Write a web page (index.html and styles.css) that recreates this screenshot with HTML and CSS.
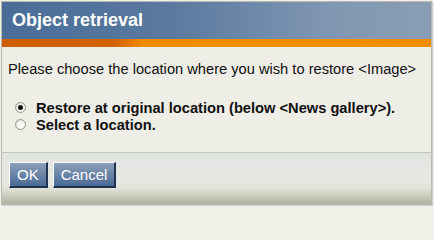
FILE: index.html
```html
<!DOCTYPE html>
<html>
<head>
<meta charset="utf-8">
<link rel="stylesheet" href="styles.css">
</head>
<body>
<div class="dialog">
  <div class="header">Object retrieval</div>
  <div class="accent"></div>
  <div class="content">
    <p class="intro">Please choose the location where you wish to restore &lt;Image&gt;</p>
    <div class="options">
      <label class="option"><span class="radio checked"></span><span class="label">Restore at original location (below &lt;News gallery&gt;).</span></label>
      <label class="option"><span class="radio"></span><span class="label">Select a location.</span></label>
    </div>
  </div>
  <div class="footer">
    <button class="btn">OK</button>
    <button class="btn">Cancel</button>
  </div>
</div>
</body>
</html>
```
FILE: styles.css
```css
html, body {
  margin: 0;
  padding: 0;
  background: #f1f1ea;
  width: 434px;
  height: 207px;
  overflow: hidden;
  font-family: "Liberation Sans", Arial, sans-serif;
}
.dialog {
  margin: 1px 0 0 1px;
  width: 429px;
  border: 1px solid #b9b9b0;
  box-shadow: 1px 1px 0 #cfcfc6;
  background: #eeede6;
}
.header {
  height: 37px;
  box-sizing: border-box;
  padding: 7px 0 0 10px;
  color: #ffffff;
  font-weight: bold;
  font-size: 18px;
  line-height: 22px;
  background: linear-gradient(to right, #4a6c98 0%, #5a7a9f 40%, #7f96b2 75%, #8a9db5 100%);
}
.accent {
  height: 8px;
  background: linear-gradient(to right, #cd5f02 0%, #d06202 26%, #ef8c00 33%, #f08e00 100%);
}
.content {
  padding: 14px 0 0 6px;
  box-sizing: border-box;
  border-bottom: 1px solid #c4c4ba;
  height: 106px;
}
.intro {
  margin: 0;
  font-size: 11pt;
  line-height: 17px;
  color: #111;
}
.options {
  margin-top: 21px;
  display: flex;
  flex-direction: column;
}
.option {
  display: flex;
  align-items: center;
  height: 17px;
  padding-left: 7px;
  gap: 10px;
}
.radio {
  width: 9px;
  height: 9px;
  border-radius: 50%;
  border: 1px solid #9a9a94;
  background: radial-gradient(circle at 60% 60%, #ffffff 0%, #f4f4f0 45%, #c8c8c2 100%);
  position: relative;
  flex: none;
}
.radio.checked::after {
  content: "";
  position: absolute;
  left: 2px;
  top: 2px;
  width: 5px;
  height: 5px;
  border-radius: 50%;
  background: #111;
}
.label {
  font-weight: bold;
  font-size: 11pt;
  color: #111;
}
.footer {
  height: 51px;
  box-sizing: border-box;
  padding: 9px 0 0 7px;
  display: flex;
  align-items: flex-start;
  gap: 5px;
  background: linear-gradient(to bottom, #e1e5e1 0%, #e6e8e3 55%, #e1e1d8 70%, #c9c9bb 85%, #b2b2a2 100%);
}
.btn {
  height: 26px;
  padding: 0 7px;
  margin: 0;
  font-family: "Liberation Sans", Arial, sans-serif;
  font-size: 15px;
  color: #ffffff;
  border-style: solid;
  border-width: 1px 2px 2px 1px;
  border-color: #ffffff #1f3350 #1f3350 #ffffff;
  background: linear-gradient(to bottom, #8da1ba 0%, #6d87a8 45%, #4b6a96 100%);
  line-height: 22px;
}
```
